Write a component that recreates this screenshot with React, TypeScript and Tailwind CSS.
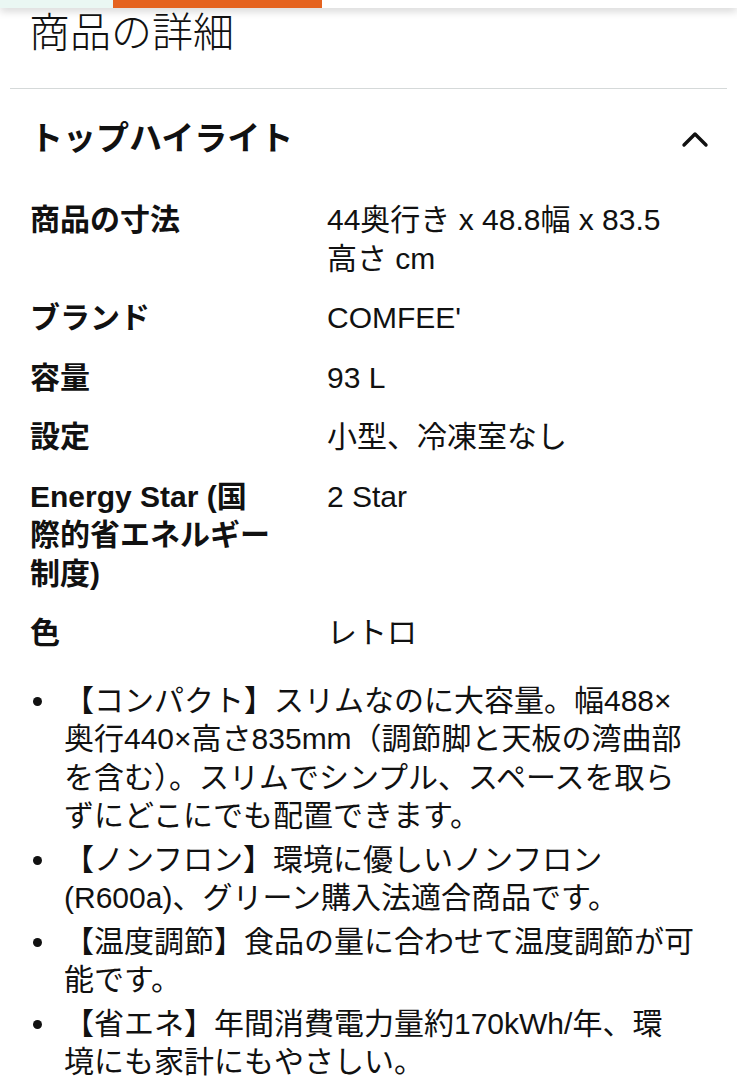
import React from 'react'

const FONT = "font-['Liberation_Sans','Noto_Sans_CJK_JP',sans-serif]"

// lines are split where the page wraps them
const rows: { label: string[]; value: string[] }[] = [
  { label: ['商品の寸法'], value: ['44奥行き x 48.8幅 x 83.5', '高さ cm'] },
  { label: ['ブランド'], value: ["COMFEE'"] },
  { label: ['容量'], value: ['93 L'] },
  { label: ['設定'], value: ['小型、冷凍室なし'] },
  { label: ['Energy Star (国', '際的省エネルギー', '制度)'], value: ['2 Star'] },
  { label: ['色'], value: ['レトロ'] },
]

const bullets: string[][] = [
  [
    '【コンパクト】スリムなのに大容量。幅488×',
    '奥行440×高さ835mm（調節脚と天板の湾曲部',
    'を含む）。スリムでシンプル、スペースを取ら',
    'ずにどこにでも配置できます。',
  ],
  ['【ノンフロン】環境に優しいノンフロン', '(R600a)、グリーン購入法適合商品です。'],
  ['【温度調節】食品の量に合わせて温度調節が可', '能です。'],
  ['【省エネ】年間消費電力量約170kWh/年、環', '境にも家計にもやさしい。'],
]

function Lines({ lines }: { lines: string[] }) {
  return (
    <>
      {lines.map((l) => (
        <span key={l} className="block whitespace-nowrap">
          {l}
        </span>
      ))}
    </>
  )
}

export default function App() {
  return (
    <div className={`${FONT} w-[737px] h-[1080px] overflow-hidden bg-white text-[#111]`}>
      <div className="flex h-[8px] shadow-[0_3px_8px_rgba(0,0,0,0.18)] relative">
        <div className="w-[113px] bg-[#eaf7f3]" />
        <div className="w-[209px] bg-[#e5631f]" />
        <div className="flex-1 bg-white" />
      </div>

      <h1 className="pl-[29px] pt-[1px] text-[41px] leading-[48px] font-light">商品の詳細</h1>

      <div className="mx-[10px] mt-[31px] border-t border-[#d5d9d9]" />

      <div className="flex items-center justify-between pl-[30px] pr-[28px] mt-[26px]">
        <h2 className="text-[33px] leading-[48px] font-bold">トップハイライト</h2>
        <svg width="28" height="18" viewBox="0 0 28 18" fill="none">
          <path d="M3 15 L14 4 L25 15" stroke="#111" strokeWidth="3.4" strokeLinecap="round" strokeLinejoin="round" />
        </svg>
      </div>

      <div className="mt-[38px] pl-[30px] pr-[24px] flex flex-col gap-[21px]">
        {rows.map((r) => (
          <div key={r.label[0]} className="flex text-[30px] leading-[38.5px]">
            <div className="w-[250px] shrink-0 font-bold">
              <Lines lines={r.label} />
            </div>
            <div className="ml-[47px] flex-1">
              <Lines lines={r.value} />
            </div>
          </div>
        ))}
      </div>

      <ul className="mt-[29px] pl-[64px] pr-[20px] flex flex-col gap-[5px]">
        {bullets.map((b) => (
          <li key={b[0]} className="relative text-[30px] leading-[38.5px]">
            <span className="absolute left-[-31px] top-[15px] w-[9px] h-[9px] rounded-full bg-[#111]" />
            <Lines lines={b} />
          </li>
        ))}
      </ul>
    </div>
  )
}
